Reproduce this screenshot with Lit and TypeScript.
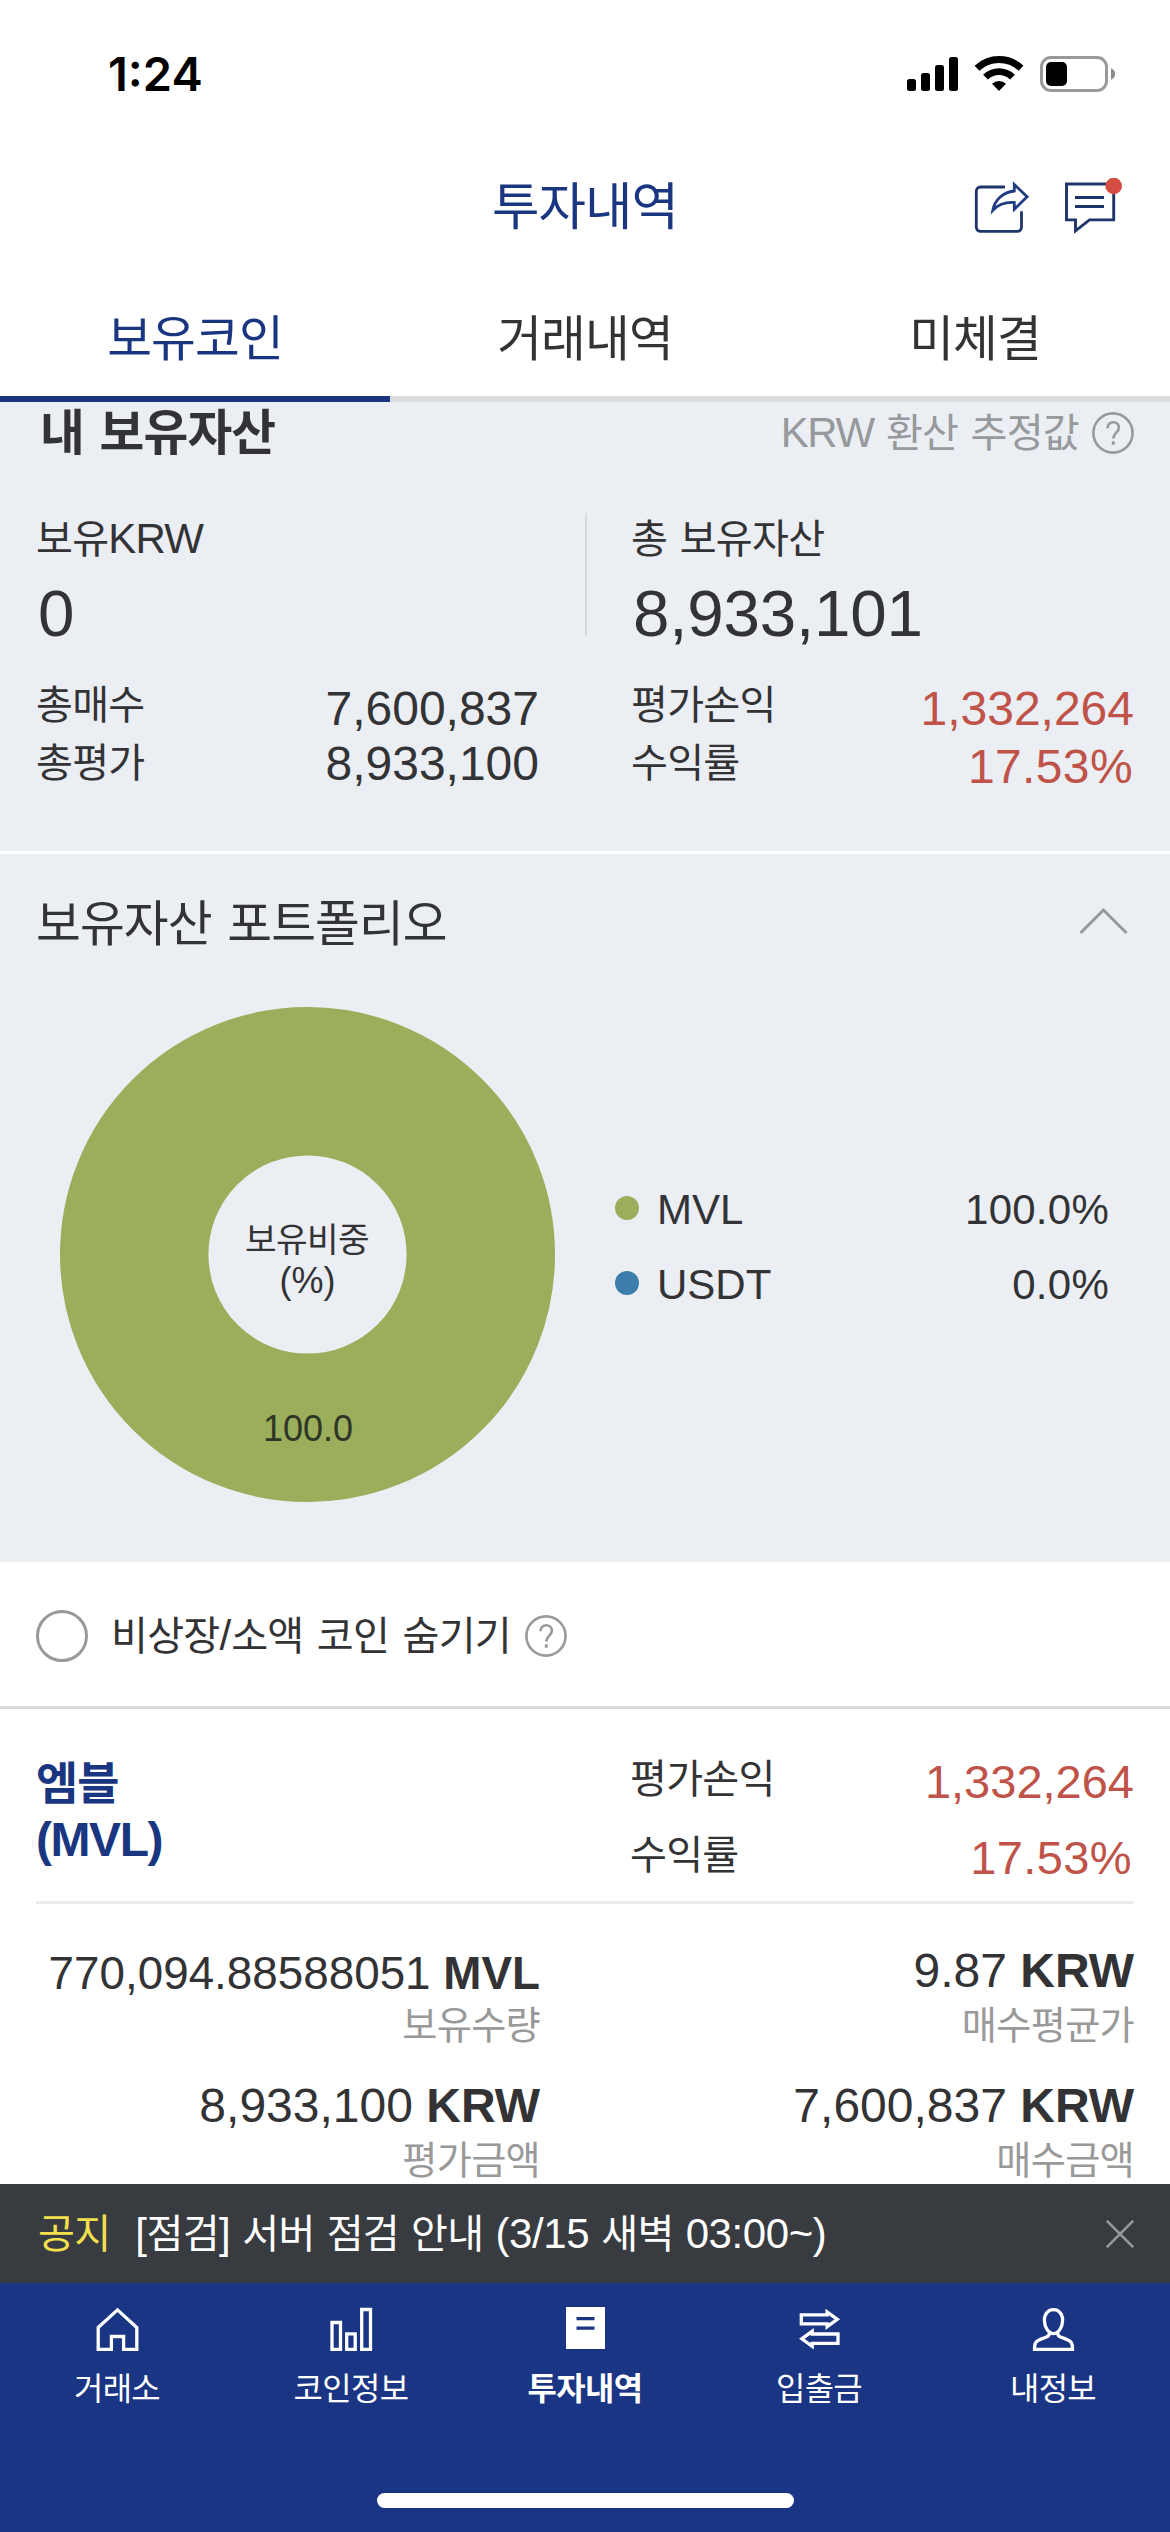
import { LitElement, html, svg, css } from "lit";
import { customElement, property } from "lit/decorators.js";

// Splits a string so that Hangul runs get their own size and tracking.
const mix = (text: string) =>
  text
    .split(/([\uac00-\ud7a3]+)/)
    .filter((part) => part !== "")
    .map((part) => (/[\uac00-\ud7a3]/.test(part) ? html`<span class="ko">${part}</span>` : part));

// The zero line-height keeps the smaller Hangul runs from stretching their line boxes.
const shared = css`
  * {
    box-sizing: border-box;
  }
  .ko {
    font-size: 0.955em;
    line-height: 0;
    letter-spacing: -0.0185em;
  }
  svg {
    display: block;
    flex: none;
  }
`;

@customElement("help-icon")
class HelpIcon extends LitElement {
  static styles = [
    shared,
    css`
      :host {
        display: block;
        flex: none;
      }
    `,
  ];
  render() {
    return html`<svg width="42" height="42" viewBox="0 0 42 42" fill="none" stroke="#97999c" stroke-width="2.6">
      <circle cx="21" cy="21" r="19.600" />
      <path d="M15.500 16.200c0-3.600 2.400-6 5.700-6s5.700 2.200 5.700 5.500c0 4.700-5.600 5.300-5.600 10.800" />
      <path d="M21.300 29.300v3.400" stroke-width="3" />
    </svg>`;
  }
}

@customElement("status-bar")
class StatusBar extends LitElement {
  static styles = [
    shared,
    css`
      :host {
        display: flex;
        align-items: center;
        justify-content: space-between;
        height: 148px;
        padding: 0 55px 0 108px;
        color: #000;
        font: 600 47px/60px Inter, "Liberation Sans", sans-serif;
      }
    `,
  ];
  render() {
    return html`<span>1:24</span>
      <svg width="208" height="38" viewBox="907 55 208 38">
        <rect x="907" y="79" width="9" height="12" rx="2.500" />
        <rect x="921" y="73" width="9" height="18" rx="2.500" />
        <rect x="935" y="65" width="9" height="26" rx="2.500" />
        <rect x="949" y="57" width="9" height="34" rx="2.500" />
        <path d="M977 68.200a32 32 0 0 1 44 0" fill="none" stroke="#000" stroke-width="7" />
        <path d="M985.500 77.200a19.200 19.200 0 0 1 27 0" fill="none" stroke="#000" stroke-width="6.800" />
        <path d="M999 91l-7-7.200a10.200 10.200 0 0 1 14 0z" />
        <rect x="1041.500" y="57.500" width="65" height="33" rx="9.500" fill="none" stroke="#999" stroke-width="3" />
        <rect x="1046" y="62" width="21" height="24" rx="5" />
        <path d="M1111 68.200c2.600 1 4.200 3.300 4.200 5.800s-1.600 4.800-4.200 5.800z" fill="#8c8c8c" />
      </svg>`;
  }
}

@customElement("page-header")
class PageHeader extends LitElement {
  static styles = [
    shared,
    css`
      :host {
        display: block;
        color: #1a3680;
      }
      .top {
        display: grid;
        grid-template-columns: 1fr auto 1fr;
        align-items: center;
        height: 116px;
        padding: 0 46px;
      }
      .title {
        grid-column: 2;
        font-size: 54px;
        line-height: 116px;
      }
      .actions {
        display: flex;
        justify-content: flex-end;
        gap: 34px;
      }
      .tabs {
        display: grid;
        grid-template-columns: repeat(3, 1fr);
      }
      .tab {
        height: 138px;
        padding-top: 18px;
        border-bottom: 6px solid #dcdcdc;
        color: #333336;
        font-size: 51px;
        line-height: 114px;
        text-align: center;
      }
      .active {
        border-bottom-color: #1a3680;
        color: #1a3680;
      }
    `,
  ];
  render() {
    return html`<div class="top">
        <div class="title">${mix("투자내역")}</div>
        <div class="actions">
          <svg width="56" height="56" viewBox="974 178 56 56" fill="none" stroke="#1f3468" stroke-width="2.800">
            <path d="M1005 187h-24.500a4.200 4.200 0 0 0-4.200 4.200v36a4.200 4.200 0 0 0 4.200 4.200h36.800a4.200 4.200 0 0 0 4.200-4.200v-16" />
            <path d="M1014.300 184.500l12.800 12.300-12.800 12.500v-6.800c-8.500-.500-15.800 1.800-21.500 7.800 1.800-9.800 9.300-17.800 21.500-19.300z" stroke="#1f3c82" />
          </svg>
          <svg width="60" height="56" viewBox="1064 178 60 56" fill="none" stroke="#1f3468" stroke-width="2.900">
            <path d="M1066.500 184h47.200v35.900h-24.200l-14 10.900v-10.900h-9z" />
            <path d="M1075 197.500h29M1075 206.500h29" />
            <circle cx="1113.700" cy="186" r="8.300" fill="#d44c42" stroke="none" />
          </svg>
        </div>
      </div>
      <div class="tabs">
        <div class="tab active">${mix("보유코인")}</div>
        <div class="tab">${mix("거래내역")}</div>
        <div class="tab">${mix("미체결")}</div>
      </div>`;
  }
}

@customElement("asset-summary")
class AssetSummary extends LitElement {
  static styles = [
    shared,
    css`
      :host {
        display: block;
        box-sizing: border-box;
        height: 452px;
        padding: 0 36px;
        border-bottom: 3px solid #fff;
        background: #ebeef3;
      }
      .heading {
        display: flex;
        align-items: center;
        height: 61px;
        padding-left: 4px;
      }
      .name {
        flex: 1;
        font-size: 51px;
        font-weight: 700;
        line-height: 61px;
        word-spacing: 0.03em;
      }
      .basis {
        margin-right: 13px;
        color: #97999c;
        font-size: 42px;
        line-height: 61px;
        letter-spacing: -0.035em;
        word-spacing: 0.05em;
      }
      .totals {
        display: grid;
        grid-template-columns: 549px 2px 1fr;
        height: 150px;
        margin-top: 50px;
      }
      .divider {
        height: 123px;
        background: #d6d9de;
      }
      .total + .divider + .total {
        padding-left: 44px;
      }
      .label {
        font-size: 42px;
        line-height: 51px;
        letter-spacing: -0.02em;
        word-spacing: 0.04em;
      }
      .big {
        padding-left: 2px;
        font-size: 65.500px;
        line-height: 99px;
        letter-spacing: -0.003em;
      }
      .stats {
        display: grid;
        grid-template-columns: 503px 503px;
        justify-content: space-between;
        margin-top: 13px;
      }
      .half {
        display: flex;
        justify-content: space-between;
      }
      .labels {
        font-size: 42px;
        line-height: 58px;
      }
      .values {
        padding-top: 5px;
        font-size: 48px;
        line-height: 55px;
        text-align: right;
      }
      .gain {
        padding-top: 4px;
        color: #c05349;
        line-height: 58px;
      }
      .rate {
        padding-right: 1px;
        letter-spacing: 0.008em;
      }
    `,
  ];
  render() {
    return html`<div class="heading">
        <div class="name">${mix("내 보유자산")}</div>
        <div class="basis">${mix("KRW 환산 추정값")}</div>
        <help-icon></help-icon>
      </div>
      <div class="totals">
        <div class="total">
          <div class="label">${mix("보유KRW")}</div>
          <div class="big">0</div>
        </div>
        <div class="divider"></div>
        <div class="total">
          <div class="label">${mix("총 보유자산")}</div>
          <div class="big">8,933,101</div>
        </div>
      </div>
      <div class="stats">
        <div class="half">
          <div class="labels"><div>${mix("총매수")}</div><div>${mix("총평가")}</div></div>
          <div class="values"><div>7,600,837</div><div>8,933,100</div></div>
        </div>
        <div class="half">
          <div class="labels"><div>${mix("평가손익")}</div><div>${mix("수익률")}</div></div>
          <div class="values gain"><div>1,332,264</div><div class="rate">17.53%</div></div>
        </div>
      </div>`;
  }
}

@customElement("asset-portfolio")
class AssetPortfolio extends LitElement {
  static styles = [
    shared,
    css`
      :host {
        display: block;
        box-sizing: border-box;
        height: 708px;
        background: #ebeef3;
      }
      .heading {
        display: flex;
        align-items: center;
        justify-content: space-between;
        height: 139px;
        padding: 0 42px 0 36px;
        font-size: 51px;
        line-height: 139px;
        word-spacing: 0.03em;
      }
      .chevron {
        margin-bottom: 6px;
      }
      .body {
        display: flex;
        align-items: flex-start;
        gap: 60px;
        padding: 14px 61px 0 60px;
      }
      .donut {
        font-size: 36px;
        fill: #333336;
        text-anchor: middle;
      }
      .share {
        font-size: 34.400px;
      }
      .legend {
        flex: 1;
        padding-top: 165px;
      }
      .row {
        display: flex;
        align-items: center;
        height: 75px;
        font-size: 42px;
        line-height: 75px;
      }
      .dot {
        width: 24px;
        height: 24px;
        margin: 0 18px 3px 0;
        border-radius: 50%;
        background: #9bae5b;
      }
      .blue {
        background: #3b7ea9;
      }
      .coin {
        flex: 1;
      }
      .percent {
        letter-spacing: 0.006em;
      }
    `,
  ];
  render() {
    return html`<div class="heading">
        <div>${mix("보유자산 포트폴리오")}</div>
        <svg class="chevron" width="49" height="30" viewBox="0 0 49 30" fill="none" stroke="#95989e" stroke-width="3">
          <path d="M1.500 27L24.500 4l23 23" />
        </svg>
      </div>
      <div class="body">
        <svg class="donut" width="495" height="495" viewBox="0 0 495 495">
          <circle cx="247.500" cy="247.500" r="173.300" fill="none" stroke="#9bae5b" stroke-width="148.400" />
          <text class="ko share" x="247" y="244.500">보유비중</text>
          <text x="247.500" y="286">(%)</text>
          <text x="248" y="434" fill="#2f3626">100.0</text>
        </svg>
        <div class="legend">
          <div class="row"><i class="dot"></i><span class="coin">MVL</span><span class="percent">100.0%</span></div>
          <div class="row"><i class="dot blue"></i><span class="coin">USDT</span><span class="percent">0.0%</span></div>
        </div>
      </div>`;
  }
}

@customElement("hide-filter")
class HideFilter extends LitElement {
  static styles = [
    shared,
    css`
      :host {
        display: flex;
        align-items: center;
        box-sizing: border-box;
        height: 147px;
        padding: 3px 36px 0;
        border-bottom: 3px solid #dadada;
        font-size: 42px;
        line-height: 60px;
        word-spacing: 0.04em;
      }
      .radio {
        width: 52px;
        height: 52px;
        margin-right: 23px;
        border: 3px solid #999;
        border-radius: 50%;
      }
      .text {
        margin-right: 14px;
      }
    `,
  ];
  render() {
    return html`<span class="radio"></span><span class="text">${mix("비상장/소액 코인 숨기기")}</span><help-icon></help-icon>`;
  }
}

@customElement("coin-card")
class CoinCard extends LitElement {
  static styles = [
    shared,
    css`
      :host {
        display: block;
        height: 475px;
        padding: 0 36px;
        overflow: hidden;
        box-sizing: border-box;
      }
      .head {
        display: grid;
        grid-template-columns: 594px auto 1fr;
        height: 195px;
        border-bottom: 3px solid #ececec;
      }
      .name {
        padding-top: 47px;
        color: #1a3680;
        font-size: 48px;
        font-weight: 700;
        line-height: 56px;
        letter-spacing: -0.03em;
      }
      .labels {
        padding-top: 32px;
        font-size: 42px;
        line-height: 76px;
      }
      .values {
        padding-top: 35px;
        color: #c05349;
        font-size: 47px;
        line-height: 76px;
        text-align: right;
      }
      .rate {
        padding-right: 2px;
        letter-spacing: 0.008em;
      }
      .details {
        display: grid;
        grid-template-columns: 504px 1fr;
        row-gap: 26px;
        padding-top: 39px;
        text-align: right;
      }
      .amount {
        height: 55px;
        font-size: 48px;
        line-height: 55px;
        white-space: nowrap;
      }
      .long {
        padding-top: 7px;
        font-size: 45.800px;
        line-height: 48px;
      }
      .caption {
        color: #999;
        font-size: 40px;
        line-height: 54px;
      }
    `,
  ];
  render() {
    return html`<div class="head">
        <div class="name"><div>${mix("엠블")}</div><div>(MVL)</div></div>
        <div class="labels"><div>${mix("평가손익")}</div><div>${mix("수익률")}</div></div>
        <div class="values"><div>1,332,264</div><div class="rate">17.53%</div></div>
      </div>
      <div class="details">
        <div>
          <div class="amount long">770,094.88588051 <b>MVL</b></div>
          <div class="caption">${mix("보유수량")}</div>
        </div>
        <div>
          <div class="amount">9.87 <b>KRW</b></div>
          <div class="caption">${mix("매수평균가")}</div>
        </div>
        <div>
          <div class="amount">8,933,100 <b>KRW</b></div>
          <div class="caption">${mix("평가금액")}</div>
        </div>
        <div>
          <div class="amount">7,600,837 <b>KRW</b></div>
          <div class="caption">${mix("매수금액")}</div>
        </div>
      </div>`;
  }
}

@customElement("notice-bar")
class NoticeBar extends LitElement {
  static styles = [
    shared,
    css`
      :host {
        display: flex;
        align-items: center;
        box-sizing: border-box;
        height: 99px;
        padding: 1px 36px 0 38px;
        background: #383b40;
        color: #fff;
        font-size: 42px;
        line-height: 98px;
        letter-spacing: -0.01em;
        word-spacing: 0.02em;
      }
      .tag {
        margin-right: 25px;
        color: #f3e04e;
      }
      .text {
        flex: 1;
      }
    `,
  ];
  render() {
    return html`<span class="tag">${mix("공지")}</span>
      <span class="text">${mix("[점검] 서버 점검 안내 (3/15 새벽 03:00~)")}</span>
      <svg width="28" height="28" viewBox="0 0 28 28" stroke="#96989b" stroke-width="2.600">
        <path d="M.8.8l26.400 26.400M27.200.8L.8 27.200" />
      </svg>`;
  }
}

const navIcons: Record<string, unknown> = {
  home: svg`<path d="M23.500 2.900L4.200 20.500v22h13.200V29.500h12.200v13h13.200v-22z" />`,
  chart: svg`<path d="M4 15.500h8.500v27H4zM18.700 26.800h8.500v15.700h-8.500zM33.700 2.500h8.800v40h-8.800z" />`,
  doc: svg`<path d="M4 0h39v42H4z" fill="#fff" stroke="none" /><path d="M14.500 11.700h18M14.500 21.200h18" stroke="#193583" />`,
  swap: svg`<path d="M5.300 7.800h25.800V4.900l10.200 7.400-10.200 7.400v-2.900H5.300zM42 27H16.200v-2.700L5.800 31.800l10.400 7.500v-2.900H42z" />`,
  person: svg`<path d="M23.500 2.700c5.400 0 9.100 4.200 9.100 10.300 0 7-3.900 13.700-9.100 13.700s-9.100-6.700-9.100-13.700c0-6.100 3.700-10.300 9.100-10.300z" /><path d="M19.300 25.300c.200 2.300-.400 3.600-2.300 4.500-4.500 2.100-9.400 2.600-11.400 6-.900 1.500-1.100 4.100-1.100 6.700h38c0-2.600-.200-5.200-1.100-6.700-2-3.400-6.900-3.900-11.400-6-1.900-.9-2.500-2.200-2.300-4.500" />`,
};

@customElement("nav-item")
class NavItem extends LitElement {
  @property() icon = "";
  @property() label = "";
  static styles = [
    shared,
    css`
      :host {
        display: flex;
        flex-direction: column;
        align-items: center;
        gap: 16px;
        font-size: 33.400px;
        line-height: 44px;
      }
    `,
  ];
  render() {
    return html`<svg width="47" height="44" viewBox="0 0 47 44" fill="none" stroke="#fff" stroke-width="3.300">
        ${navIcons[this.icon]}
      </svg>
      <div>${mix(this.label)}</div>`;
  }
}

@customElement("bottom-nav")
class BottomNav extends LitElement {
  static styles = [
    shared,
    css`
      :host {
        display: flex;
        flex-direction: column;
        align-items: center;
        justify-content: space-between;
        box-sizing: border-box;
        height: 249px;
        padding: 24px 0;
        background: #193583;
        color: #fff;
      }
      .items {
        display: grid;
        grid-template-columns: repeat(5, 1fr);
        width: 100%;
      }
      .current {
        font-weight: 700;
      }
      .indicator {
        width: 417px;
        height: 15px;
        border-radius: 8px;
        background: #fff;
      }
    `,
  ];
  render() {
    return html`<div class="items">
        <nav-item icon="home" label="거래소"></nav-item>
        <nav-item icon="chart" label="코인정보"></nav-item>
        <nav-item class="current" icon="doc" label="투자내역"></nav-item>
        <nav-item icon="swap" label="입출금"></nav-item>
        <nav-item icon="person" label="내정보"></nav-item>
      </div>
      <div class="indicator"></div>`;
  }
}

@customElement("app-root")
class AppRoot extends LitElement {
  static styles = css`
    :host {
      display: flex;
      flex-direction: column;
      width: 1170px;
      height: 2532px;
      overflow: hidden;
      background: #fff;
      color: #333336;
      font-family: "Liberation Sans", "Noto Sans CJK KR", sans-serif;
    }
  `;
  render() {
    return html`<status-bar></status-bar>
      <page-header></page-header>
      <asset-summary></asset-summary>
      <asset-portfolio></asset-portfolio>
      <hide-filter></hide-filter>
      <coin-card></coin-card>
      <notice-bar></notice-bar>
      <bottom-nav></bottom-nav>`;
  }
}
